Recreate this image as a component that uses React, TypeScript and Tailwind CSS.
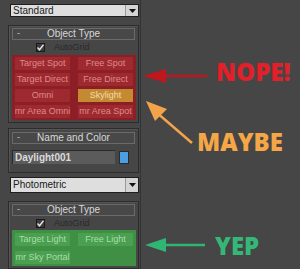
import React from 'react';

const RED_BTNS = [
  ['Target Spot', 'Free Spot'],
  ['Target Direct', 'Free Direct'],
  ['Omni', 'Skylight'],
  ['mr Area Omni', 'mr Area Spot'],
];

const Dropdown = ({ label }: { label: string }) => (
  <div className="ml-[2px] flex h-[16px] w-[129px] items-center border border-[#1e1e1e] bg-[#dedede]">
    <span className="flex-1 pl-[2px] text-[10px] leading-none text-[#202020]">{label}</span>
    <span className="flex h-full w-[13px] items-center justify-center border-l border-[#9a9a9a] bg-[#d4d4d4]">
      <svg width="7" height="4" viewBox="0 0 7 4">
        <polygon points="0,0 7,0 3.5,4" fill="#111" />
      </svg>
    </span>
  </div>
);

const Header = ({ title }: { title: string }) => (
  <div className="relative flex h-[12px] items-center justify-center border border-[#6a6a6a] bg-[#484848]">
    <span className="absolute left-[4px] top-[0px] text-[9px] leading-none text-[#cfcfcf]">-</span>
    <span className="text-[10px] leading-none text-[#d8d8d8]">{title}</span>
  </div>
);

const AutoGrid = () => (
  <div className="mt-[2px] flex h-[10px] items-center pl-[24px]">
    <span className="flex h-[9px] w-[9px] items-center justify-center border border-[#1a1a1a] bg-[#3c3c3c]">
      <svg width="7" height="7" viewBox="0 0 7 7">
        <polyline points="0.5,3.5 2.5,5.8 6.5,0.8" fill="none" stroke="#e6e6e6" strokeWidth="1.4" />
      </svg>
    </span>
    <span className="ml-[9px] whitespace-nowrap text-[9px] leading-none text-[#2a2a2a]">AutoGrid</span>
  </div>
);

const Panel = ({ children }: { children: React.ReactNode }) => (
  <div className="w-[131px] border border-[#2c2c2c] px-[3px] pt-[2px] shadow-[inset_1px_1px_0_#555]">{children}</div>
);

export default function App() {
  return (
    <div
      className="relative flex h-[269px] w-[300px] overflow-hidden bg-[#464646]"
      style={{ fontFamily: '"Liberation Sans", Arial, sans-serif' }}
    >
      <div className="flex h-full w-[141px] flex-col border-r border-[#333] pl-[8px] pt-[4px]">
        <Dropdown label="Standard" />

        <div className="mt-[8px]">
          <Panel>
            <Header title="Object Type" />
            <AutoGrid />
            <div className="mt-[3px] grid w-[124px] grid-cols-2 gap-x-[8px] gap-y-[3px] bg-[#8c1f25] px-[3px] pb-[2px] pt-[2px]">
              {RED_BTNS.flat().map((b) => (
                <div
                  key={b}
                  className={`flex h-[13px] items-center justify-center whitespace-nowrap text-[9px] leading-none ${
                    b === 'Skylight'
                      ? 'bg-[#c48a32] text-[#f2dcae]'
                      : 'bg-[#9e2a30] text-[#dc8a8c]'
                  }`}
                >
                  {b}
                </div>
              ))}
            </div>
            <div className="h-[2px]" />
          </Panel>
        </div>

        <div className="mt-[5px]">
          <Panel>
            <div className="mt-[1px]">
              <Header title="Name and Color" />
            </div>
            <div className="mt-[6px] flex items-center">
              <div className="flex h-[14px] w-[103px] items-center border-t border-l border-[#2a2a2a] bg-[#5b5b5b] pl-[2px] text-[10px] font-bold leading-none text-[#dadada]">
                Daylight001
              </div>
              <div className="ml-[4px] h-[13px] w-[10px] border border-[#2a2a2a] bg-[#4b9ee3]" />
            </div>
            <div className="h-[8px]" />
          </Panel>
        </div>

        <div className="mt-[4px]">
          <Dropdown label="Photometric" />
        </div>

        <div className="mt-[8px]">
          <Panel>
            <Header title="Object Type" />
            <AutoGrid />
            <div className="mt-[2px] grid w-[124px] grid-cols-2 gap-x-[8px] gap-y-[5px] bg-[#3f8f45] px-[3px] pb-[2px] pt-[3px]">
              {['Target Light', 'Free Light', 'mr Sky Portal'].map((b) => (
                <div
                  key={b}
                  className="flex h-[13px] items-center justify-center whitespace-nowrap bg-[#4a9f50] text-[9px] leading-none text-[#a9deab]"
                >
                  {b}
                </div>
              ))}
            </div>
            <div className="h-[2px]" />
          </Panel>
        </div>
      </div>

      <svg className="absolute left-0 top-0" width="300" height="269" viewBox="0 0 300 269">
        <line x1="160" y1="76" x2="207" y2="76" stroke="#c0161e" strokeWidth="2.5" />
        <polygon points="143,76 166,69 166,83" fill="#c0161e" />
        <line x1="192" y1="143" x2="156" y2="112" stroke="#f3a44a" strokeWidth="2.5" />
        <polygon points="146,101 167,109 155,121" fill="#f3a44a" />
        <line x1="162" y1="245" x2="205" y2="245" stroke="#2fb673" strokeWidth="2.5" />
        <polygon points="145,245 166,238 166,252" fill="#2fb673" />
      </svg>

      <div
        className="absolute left-[216px] top-[60px] text-[24px] font-extrabold leading-none text-[#e3202a]"
        style={{ fontFamily: '"Open Sans", sans-serif' }}
      >
        NOPE!
      </div>
      <div
        className="absolute left-[197px] top-[130px] text-[24px] font-extrabold leading-none text-[#f5a747]"
        style={{ fontFamily: '"Open Sans", sans-serif' }}
      >
        MAYBE
      </div>
      <div
        className="absolute left-[215px] top-[234px] text-[24px] font-extrabold leading-none text-[#35b877]"
        style={{ fontFamily: '"Open Sans", sans-serif' }}
      >
        YEP
      </div>
    </div>
  );
}
